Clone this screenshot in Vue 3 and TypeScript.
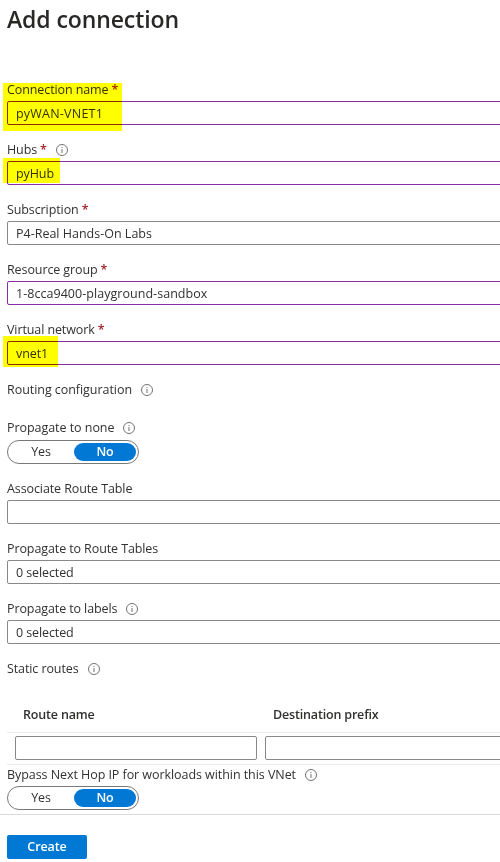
<script setup lang="ts">
import { defineComponent, h, ref } from 'vue'

interface Field {
  label: string
  value: string
  required?: boolean
  info?: boolean
  edited?: boolean
  mark?: string
  tracking?: string
}

const basics: Field[] = [
  { label: 'Connection name', value: 'pyWAN-VNET1', required: true, edited: true, mark: 'mark-name', tracking: 'loose' },
  { label: 'Hubs', value: 'pyHub', required: true, info: true, edited: true, mark: 'mark-hub' },
  { label: 'Subscription', value: 'P4-Real Hands-On Labs', required: true, tracking: 'normal' },
  { label: 'Resource group', value: '1-8cca9400-playground-sandbox', required: true, edited: true, tracking: 'medium' },
  { label: 'Virtual network', value: 'vnet1', required: true, edited: true, mark: 'mark-vnet' },
]

const routing: Field[] = [
  { label: 'Associate Route Table', value: '' },
  { label: 'Propagate to Route Tables', value: '0 selected' },
  { label: 'Propagate to labels', value: '0 selected', info: true },
]

const propagateNone = ref(false)
const bypass = ref(false)

const InfoIcon = defineComponent({
  render: () =>
    h('svg', { width: 12, height: 12, viewBox: '0 0 12 12', fill: 'none' }, [
      h('circle', { cx: 6, cy: 6, r: 5.5, stroke: '#757371', 'stroke-width': 1 }),
      h('path', { d: 'M6 5V9M6 3V4.1', stroke: '#8a8886', 'stroke-width': 1.2 }),
    ]),
})
</script>

<template>
  <main class="blade">
    <h1>Add connection</h1>

    <section class="basics">
      <div v-for="f in basics" :key="f.label" class="field">
        <div class="label">
          <span>{{ f.label }}</span><b v-if="f.required" class="star">*</b>
          <InfoIcon v-if="f.info" class="info" />
        </div>
        <div class="box" :class="[{ edited: f.edited }, f.tracking]">{{ f.value }}</div>
        <i v-if="f.mark" class="mark" :class="f.mark"></i>
      </div>
    </section>

    <div class="label routing-title"><span>Routing configuration</span><InfoIcon class="info" /></div>

    <div class="label none-title"><span>Propagate to none</span><InfoIcon class="info" /></div>
    <div class="toggle">
      <span :class="{ on: propagateNone }" @click="propagateNone = true">Yes</span>
      <span :class="{ on: !propagateNone }" @click="propagateNone = false">No</span>
    </div>

    <section class="routing">
      <div v-for="f in routing" :key="f.label" class="field">
        <div class="label"><span>{{ f.label }}</span><InfoIcon v-if="f.info" class="info" /></div>
        <div class="box">{{ f.value }}</div>
      </div>
    </section>

    <div class="label static-title"><span>Static routes</span><InfoIcon class="info" /></div>

    <div class="table">
      <div class="row head"><span>Route name</span><span>Destination prefix</span></div>
      <div class="row cells"><div class="box cell"></div><div class="box cell wide"></div></div>
    </div>

    <div class="label bypass-title">
      <span>Bypass Next Hop IP for workloads within this VNet</span><InfoIcon class="info" />
    </div>
    <div class="toggle">
      <span :class="{ on: bypass }" @click="bypass = true">Yes</span>
      <span :class="{ on: !bypass }" @click="bypass = false">No</span>
    </div>

    <footer><button type="button">Create</button></footer>
  </main>
</template>

<style>
body {
  background: #fff;
}
</style>

<style scoped>
.blade {
  box-sizing: border-box;
  width: 500px;
  height: 862px;
  overflow: hidden;
  padding-left: 7px;
  background: #fff;
  color: #323130;
  font-family: 'Open Sans', 'Noto Sans', sans-serif;
  font-size: 12.5px;
  letter-spacing: -0.1px;
}
h1 {
  margin: 0;
  padding-top: 3px;
  height: 77px;
  box-sizing: border-box;
  font-size: 23px;
  line-height: 32px;
  font-weight: 600;
  letter-spacing: -0.1px;
  color: #292827;
}
.field {
  position: relative;
  height: 44px;
  margin-bottom: 16px;
}
.basics {
  padding-top: 4px;
}
.label {
  display: flex;
  align-items: center;
  height: 18px;
  line-height: 18px;
  white-space: nowrap;
}
.field .label {
  margin-bottom: 2px;
}
.star {
  margin-left: 3px;
  color: #a4262c;
  font-weight: 600;
}
.info {
  flex: none;
  margin-left: 9px;
}
.box {
  box-sizing: border-box;
  width: 520px;
  height: 24px;
  padding-left: 8px;
  border: 1px solid #8a8886;
  border-radius: 2px;
  line-height: 23px;
  white-space: nowrap;
}
.edited {
  border-color: #8a2da5;
}
.loose {
  letter-spacing: 0.22px;
}
.normal {
  letter-spacing: 0;
}
.medium {
  letter-spacing: 0.04px;
}
.mark {
  position: absolute;
  left: -4px;
  background: #ff0;
  mix-blend-mode: multiply;
}
.mark-name {
  top: 2px;
  width: 119px;
  height: 48px;
}
.mark-hub {
  top: 17px;
  width: 57px;
  height: 25px;
}
.mark-vnet {
  top: 15px;
  width: 55px;
  height: 31px;
}
.routing-title {
  margin-bottom: 20px;
  letter-spacing: -0.05px;
}
.none-title {
  margin-bottom: 3px;
  letter-spacing: -0.05px;
}
.toggle {
  display: grid;
  grid-template-columns: 62px 62px;
  gap: 2px;
  box-sizing: border-box;
  width: 132px;
  height: 24px;
  padding: 2px;
  border: 1px solid #7a7876;
  border-radius: 12px;
  line-height: 18px;
  text-align: center;
}
.toggle span {
  height: 18px;
  border-radius: 9px;
}
.toggle .on {
  background: #0078d4;
  color: #fff;
  font-weight: 600;
}
.routing {
  margin-top: 16px;
}
.static-title {
  margin-bottom: 19px;
}
.row {
  display: grid;
  grid-template-columns: 250px 243px;
  box-sizing: border-box;
}
.head {
  height: 36px;
  border-bottom: 1px solid #edebe9;
  line-height: 36px;
  font-weight: 600;
  letter-spacing: -0.17px;
}
.head span {
  padding-left: 16px;
}
.cells {
  height: 32px;
  padding-top: 3px;
  border-bottom: 1px solid #edebe9;
}
.cell {
  width: 242px;
  margin-left: 8px;
}
.wide {
  width: 260px;
}
.bypass-title {
  margin: 1px 0 2px;
  letter-spacing: -0.06px;
}
footer {
  margin: 4px 0 0 -7px;
  padding: 20px 0 0 7px;
  border-top: 1px solid #dcdad8;
}
button {
  display: block;
  width: 80px;
  height: 24px;
  padding: 0 0 1px;
  border: 0;
  border-radius: 2px;
  background: #0078d4;
  color: #fff;
  font: inherit;
  font-weight: 600;
  letter-spacing: inherit;
}
</style>
